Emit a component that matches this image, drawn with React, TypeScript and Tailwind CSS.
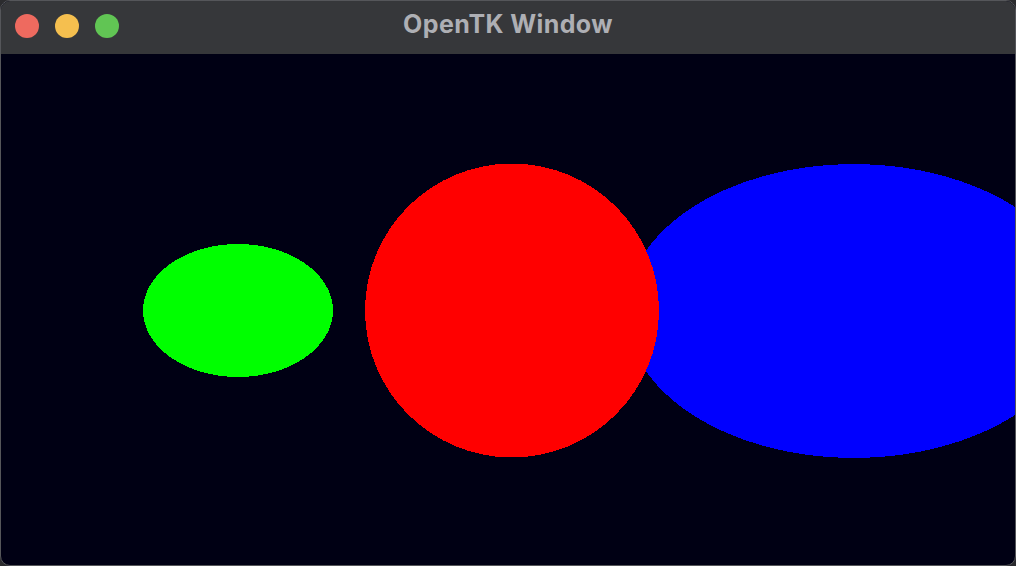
// App.tsx
function TrafficLights() {
  return (
    <div className="absolute left-[14px] top-[13px] flex gap-4">
      <span className="h-6 w-6 rounded-full bg-[#ee6a5f]" />
      <span className="h-6 w-6 rounded-full bg-[#f5bf4f]" />
      <span className="h-6 w-6 rounded-full bg-[#61c554]" />
    </div>
  );
}

export default function App() {
  return (
    <div className="h-[566px] w-[1016px] bg-[#2b2b2e]">
      <div className="flex h-full w-full flex-col overflow-hidden rounded-[10px] border border-[#55565a] bg-[#000014]">
        <div className="relative flex h-[53px] shrink-0 items-center justify-center bg-[#36373a] pb-[5px]">
          <TrafficLights />
          <h1
            className="text-[25px] font-bold tracking-[0.4px] text-[#aeafb4]"
            style={{ fontFamily: "Inter, 'Noto Sans', sans-serif" }}
          >
            OpenTK Window
          </h1>
        </div>
        <div className="flex-1">
          <svg width="1016" height="512" viewBox="1 54 1016 512" shapeRendering="crispEdges">
            <ellipse cx="854" cy="311" rx="228" ry="147" fill="#0000ff" />
            <circle cx="512" cy="310.5" r="147" fill="#ff0000" />
            <ellipse cx="238" cy="310.5" rx="95" ry="66.5" fill="#00ff00" />
          </svg>
        </div>
      </div>
    </div>
  );
}
